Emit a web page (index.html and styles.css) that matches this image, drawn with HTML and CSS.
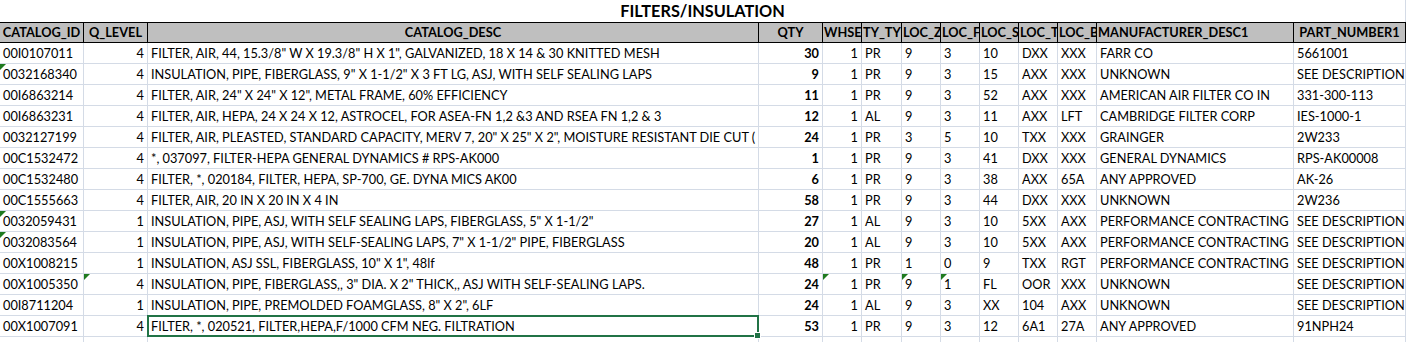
FILE: index.html
```html
<!DOCTYPE html>
<html lang="en">
<head>
<meta charset="utf-8">
<title>FILTERS/INSULATION</title>
<link rel="stylesheet" href="styles.css">
</head>
<body>
<div class="sheet">
  <div class="title">FILTERS/INSULATION</div>
  <div class="row head">
    <div class="c ctr">CATALOG_ID</div>
    <div class="c ctr">Q_LEVEL</div>
    <div class="c ctr">CATALOG_DESC</div>
    <div class="c ctr">QTY</div>
    <div class="c">WHSE</div>
    <div class="c">TY_TYPE</div>
    <div class="c">LOC_ZONE</div>
    <div class="c">LOC_FLOOR</div>
    <div class="c">LOC_SEC</div>
    <div class="c">LOC_TIER</div>
    <div class="c">LOC_BIN</div>
    <div class="c">MANUFACTURER_DESC1</div>
    <div class="c ctr">PART_NUMBER1</div>
  </div>

  <div class="row">
    <div class="c">00I0107011</div><div class="c num">4</div>
    <div class="c">FILTER, AIR, 44, 15.3/8" W X 19.3/8" H X 1", GALVANIZED, 18 X 14 &amp; 30 KNITTED MESH</div>
    <div class="c num b">30</div><div class="c num">1</div><div class="c">PR</div><div class="c">9</div><div class="c">3</div><div class="c">10</div><div class="c">DXX</div><div class="c">XXX</div>
    <div class="c">FARR CO</div><div class="c">5661001</div>
  </div>
  <div class="row">
    <div class="c tri">0032168340</div><div class="c num">4</div>
    <div class="c">INSULATION, PIPE, FIBERGLASS, 9" X 1-1/2" X 3 FT LG, ASJ, WITH SELF SEALING LAPS</div>
    <div class="c num b">9</div><div class="c num">1</div><div class="c">PR</div><div class="c">9</div><div class="c">3</div><div class="c">15</div><div class="c">AXX</div><div class="c">XXX</div>
    <div class="c">UNKNOWN</div><div class="c">SEE DESCRIPTION</div>
  </div>
  <div class="row">
    <div class="c">00I6863214</div><div class="c num">4</div>
    <div class="c">FILTER, AIR, 24" X 24" X 12", METAL FRAME, 60% EFFICIENCY</div>
    <div class="c num b">11</div><div class="c num">1</div><div class="c">PR</div><div class="c">9</div><div class="c">3</div><div class="c">52</div><div class="c">AXX</div><div class="c">XXX</div>
    <div class="c">AMERICAN AIR FILTER CO IN</div><div class="c">331-300-113</div>
  </div>
  <div class="row">
    <div class="c">00I6863231</div><div class="c num">4</div>
    <div class="c">FILTER, AIR, HEPA, 24 X 24 X 12, ASTROCEL, FOR ASEA-FN 1,2 &amp;3 AND RSEA FN 1,2 &amp; 3</div>
    <div class="c num b">12</div><div class="c num">1</div><div class="c">AL</div><div class="c">9</div><div class="c">3</div><div class="c">11</div><div class="c">AXX</div><div class="c">LFT</div>
    <div class="c">CAMBRIDGE FILTER CORP</div><div class="c">IES-1000-1</div>
  </div>
  <div class="row">
    <div class="c">0032127199</div><div class="c num">4</div>
    <div class="c">FILTER, AIR, PLEASTED, STANDARD CAPACITY, MERV 7, 20" X 25" X 2", MOISTURE RESISTANT DIE CUT (</div>
    <div class="c num b">24</div><div class="c num">1</div><div class="c">PR</div><div class="c">3</div><div class="c">5</div><div class="c">10</div><div class="c">TXX</div><div class="c">XXX</div>
    <div class="c">GRAINGER</div><div class="c">2W233</div>
  </div>
  <div class="row">
    <div class="c">00C1532472</div><div class="c num">4</div>
    <div class="c">*, 037097, FILTER-HEPA GENERAL DYNAMICS # RPS-AK000</div>
    <div class="c num b">1</div><div class="c num">1</div><div class="c">PR</div><div class="c">9</div><div class="c">3</div><div class="c">41</div><div class="c">DXX</div><div class="c">XXX</div>
    <div class="c">GENERAL DYNAMICS</div><div class="c">RPS-AK00008</div>
  </div>
  <div class="row">
    <div class="c">00C1532480</div><div class="c num">4</div>
    <div class="c">FILTER, *, 020184, FILTER, HEPA, SP-700, GE. DYNA MICS AK00</div>
    <div class="c num b">6</div><div class="c num">1</div><div class="c">PR</div><div class="c">9</div><div class="c">3</div><div class="c">38</div><div class="c">AXX</div><div class="c">65A</div>
    <div class="c">ANY APPROVED</div><div class="c">AK-26</div>
  </div>
  <div class="row">
    <div class="c">00C1555663</div><div class="c num">4</div>
    <div class="c">FILTER, AIR, 20 IN X 20 IN X 4 IN</div>
    <div class="c num b">58</div><div class="c num">1</div><div class="c">PR</div><div class="c">9</div><div class="c">3</div><div class="c">44</div><div class="c">DXX</div><div class="c">XXX</div>
    <div class="c">UNKNOWN</div><div class="c">2W236</div>
  </div>
  <div class="row">
    <div class="c tri">0032059431</div><div class="c num">1</div>
    <div class="c">INSULATION, PIPE, ASJ, WITH SELF SEALING LAPS, FIBERGLASS, 5" X 1-1/2"</div>
    <div class="c num b">27</div><div class="c num">1</div><div class="c">AL</div><div class="c">9</div><div class="c">3</div><div class="c">10</div><div class="c">5XX</div><div class="c">AXX</div>
    <div class="c">PERFORMANCE CONTRACTING</div><div class="c">SEE DESCRIPTION</div>
  </div>
  <div class="row">
    <div class="c tri">0032083564</div><div class="c num">1</div>
    <div class="c">INSULATION, PIPE, ASJ, WITH SELF-SEALING LAPS, 7" X 1-1/2" PIPE, FIBERGLASS</div>
    <div class="c num b">20</div><div class="c num">1</div><div class="c">AL</div><div class="c">9</div><div class="c">3</div><div class="c">10</div><div class="c">5XX</div><div class="c">AXX</div>
    <div class="c">PERFORMANCE CONTRACTING</div><div class="c">SEE DESCRIPTION</div>
  </div>
  <div class="row">
    <div class="c">00X1008215</div><div class="c num">1</div>
    <div class="c">INSULATION, ASJ SSL, FIBERGLASS, 10" X 1", 48lf</div>
    <div class="c num b">48</div><div class="c num">1</div><div class="c">PR</div><div class="c">1</div><div class="c">0</div><div class="c">9</div><div class="c">TXX</div><div class="c">RGT</div>
    <div class="c">PERFORMANCE CONTRACTING</div><div class="c">SEE DESCRIPTION</div>
  </div>
  <div class="row">
    <div class="c">00X1005350</div><div class="c num tri">4</div>
    <div class="c">INSULATION, PIPE, FIBERGLASS,, 3" DIA. X 2" THICK,, ASJ WITH SELF-SEALING LAPS.</div>
    <div class="c num b">24</div><div class="c num tri">1</div><div class="c">PR</div><div class="c tri">9</div><div class="c tri">1</div><div class="c">FL</div><div class="c">OOR</div><div class="c">XXX</div>
    <div class="c">UNKNOWN</div><div class="c">SEE DESCRIPTION</div>
  </div>
  <div class="row">
    <div class="c">00I8711204</div><div class="c num">1</div>
    <div class="c">INSULATION, PIPE, PREMOLDED FOAMGLASS, 8" X 2", 6LF</div>
    <div class="c num b">24</div><div class="c num">1</div><div class="c">AL</div><div class="c">9</div><div class="c">3</div><div class="c">XX</div><div class="c">104</div><div class="c">AXX</div>
    <div class="c">UNKNOWN</div><div class="c">SEE DESCRIPTION</div>
  </div>
  <div class="row">
    <div class="c">00X1007091</div><div class="c num">4</div>
    <div class="c sel">FILTER, *, 020521, FILTER,HEPA,F/1000 CFM NEG. FILTRATION</div>
    <div class="c num b">53</div><div class="c num">1</div><div class="c">PR</div><div class="c">9</div><div class="c">3</div><div class="c">12</div><div class="c">6A1</div><div class="c">27A</div>
    <div class="c">ANY APPROVED</div><div class="c">91NPH24</div>
  </div>
  <div class="row">
    <div class="c"></div><div class="c"></div><div class="c"></div><div class="c"></div><div class="c"></div><div class="c"></div><div class="c"></div><div class="c"></div><div class="c"></div><div class="c"></div><div class="c"></div><div class="c"></div><div class="c"></div>
  </div>
</div>
</body>
</html>
```

FILE: styles.css
```css
html, body {
  margin: 0;
  padding: 0;
  background: #ffffff;
}

.sheet {
  width: 1406px;
  font-family: "Lato", "Liberation Sans", sans-serif;
  font-size: 12.75px;
  color: #000000;
}

.title {
  height: 22px;
  line-height: 22px;
  text-align: center;
  font-weight: bold;
  font-size: 16.3px;
  box-sizing: border-box;
  border-right: 1px solid #d4dbe6;
}

.row {
  display: grid;
  grid-template-columns: 84px 64px 611px 64px 39px 40px 39px 39px 39px 39px 39px 197px 112px;
  height: 21px;
}

.c {
  position: relative;
  box-sizing: border-box;
  height: 21px;
  line-height: 20px;
  padding: 0 2px 0 3px;
  border-right: 1px solid #d4dbe6;
  border-bottom: 1px solid #d4dbe6;
  white-space: nowrap;
  overflow: hidden;
  text-overflow: clip;
}

.head .c {
  background: #bfbfbf;
  font-weight: bold;
  border-top: 1px solid #000000;
  border-right: 1px solid #000000;
  border-bottom: 1px solid #000000;
  line-height: 19px;
  padding: 0 1px;
}

.head .ctr {
  text-align: center;
}

.num {
  text-align: right;
  padding: 0 3px 0 2px;
}

.b {
  font-weight: bold;
}

.tri::before {
  content: "";
  position: absolute;
  left: 0;
  top: 0;
  border-top: 6px solid #1f7a1f;
  border-right: 6px solid transparent;
}

.sel {
  overflow: visible;
  z-index: 2;
}

.sel::after {
  content: "";
  position: absolute;
  left: -1px;
  top: -1px;
  right: -1px;
  bottom: -1px;
  border: 2px solid #217346;
  pointer-events: none;
}

.sel::before {
  content: "";
  position: absolute;
  right: -3px;
  bottom: -3px;
  width: 5px;
  height: 5px;
  background: #217346;
  border: 1px solid #ffffff;
  box-sizing: content-box;
  z-index: 3;
}
```
